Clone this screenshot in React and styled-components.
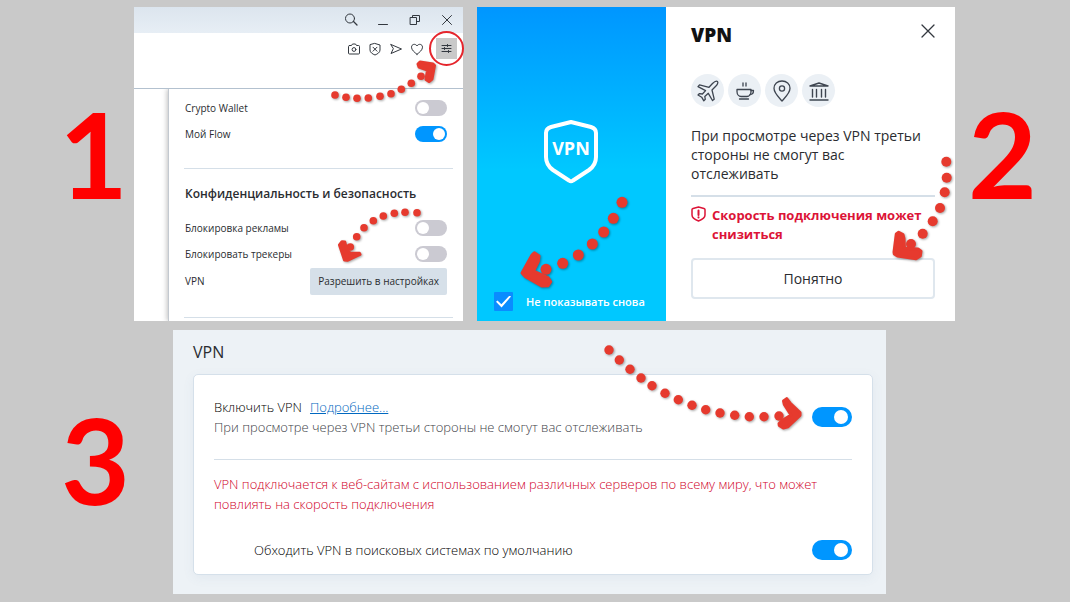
import React from "react";
import styled, { createGlobalStyle } from "styled-components";

const GlobalStyle = createGlobalStyle`
  * {
    box-sizing: border-box;
  }
  body {
    margin: 0;
    background: #c9c9c9;
    color: #2a2c30;
    font-family: "Open Sans", "Noto Sans", sans-serif;
  }
  h2, h3, p {
    margin: 0;
  }
  button, input {
    font-family: inherit;
    margin: 0;
  }
`;

const Page = styled.main`
  display: flex;
  flex-direction: column;
  gap: 9px;
  min-height: 100vh;
  padding: 7px 0;
`;

const TopStep = styled.section`
  display: grid;
  grid-template-columns: 134px minmax(0, 1fr) 115px;
`;

const BottomStep = styled.section`
  display: grid;
  grid-template-columns: 173px minmax(0, 1fr) 184px;
`;

const Panels = styled.div`
  display: grid;
  grid-template-columns: minmax(0, 329fr) minmax(0, 478fr);
  gap: 14px;
`;

const StepNumber = styled.div`
  padding-top: ${props => props.top}px;
  padding-left: ${props => props.left}px;
  color: #ff0000;
  font-family: Lato, sans-serif;
  font-size: 119px;
  font-weight: 700;
  line-height: 146px;
`;

/* dotted arrows */

const ArrowSvg = styled.svg`
  position: absolute;
  top: ${props => props.$top}px;
  left: ${props => (props.$left === undefined ? "auto" : `${props.$left}px`)};
  right: ${props => (props.$right === undefined ? "auto" : `${props.$right}px`)};
  fill: #e63a2e;
  stroke: #e63a2e;
  stroke-linejoin: round;
  filter: drop-shadow(1px 1px 1px rgba(0, 0, 0, 0.35));
  pointer-events: none;
  z-index: 2;
`;

const Arrow = ({ width, height, dots, radius, head, top, left, right }) => (
  <ArrowSvg
    width={width}
    height={height}
    $top={top}
    $left={left}
    $right={right}
    aria-hidden="true"
  >
    {dots.map(([x, y]) => (
      <circle key={`${x}-${y}`} cx={x} cy={y} r={radius} stroke="none" />
    ))}
    <polygon points={head} strokeWidth="3" />
  </ArrowSvg>
);

const arrows = {
  menu: {
    width: 110, height: 48, radius: 3.8,
    dots: [[5, 37], [16, 39.3], [27, 40.3], [38.3, 40], [50, 38.3], [61, 35.7], [71.3, 31.3], [81.3, 25.3], [91, 18.3]],
    head: "88,6 90,4 103,6 104.5,7.5 102,21 99,23.5 96,21.5 97.5,12 89,9"
  },
  allow: {
    width: 90, height: 58, radius: 3.8,
    dots: [[82, 4.7], [70, 4.3], [59.3, 5.3], [48.3, 8], [38.3, 12.7], [29, 19.7], [21.7, 28.7], [15.3, 39]],
    head: "4.5,37 7,33.7 9.8,34 11.5,41 15,45 24.5,45.3 25,46.3 12.3,52.3 9.5,52"
  },
  checkbox: {
    width: 112, height: 98, radius: 5.5,
    dots: [[104, 7.3], [95.3, 23.3], [85.7, 37], [74.3, 49], [60.3, 60], [44.7, 68.3], [28, 74.3]],
    head: "4,78 14,60 16.3,57.7 21,61 20.3,66.5 15.5,76 30,82.5 32.7,86.7 30,90.7 23.7,91 7.5,81.7"
  },
  confirm: {
    width: 64, height: 110, radius: 5,
    dots: [[56.3, 7.7], [56.7, 23.7], [54.7, 38.3], [50, 54], [42.7, 67.3], [32.7, 79.7], [21, 90]],
    head: "4,98 6.3,80 8.7,78.3 13,80.5 14,84.5 14.5,94.3 28,95 31,97.3 30.3,102 26,104.7 7.5,102 4.3,100"
  },
  enable: {
    width: 204, height: 92, radius: 4.7,
    dots: [[5, 6], [15.3, 16], [26, 25.3], [37, 34], [48, 41.7], [61, 49.3], [74.3, 55.7], [88, 61.3], [101.7, 65.7], [116, 69], [130.7, 71.3], [145.3, 72.7], [160, 72.7], [175, 72]],
    head: "179.5,57 182.7,54.7 186,59 196,68.6 196,71.3 184,82.7 179.3,84 175.3,81.5 175,79.5 177.5,77 187,71 180.3,60.5"
  }
};

/* shared controls */

const Switch = styled.input.attrs({ type: "checkbox", role: "switch" })`
  appearance: none;
  flex: none;
  display: flex;
  align-items: center;
  width: ${props => (props.$large ? 40 : 32)}px;
  height: ${props => (props.$large ? 20 : 16)}px;
  padding: 0 ${props => (props.$large ? 4 : 2)}px;
  border-radius: 10px;
  background: #cbcad2;
  cursor: pointer;

  &::before {
    content: "";
    width: ${props => (props.$large ? 14 : 12)}px;
    height: ${props => (props.$large ? 14 : 12)}px;
    border-radius: 50%;
    background: #fff;
  }
  &:checked {
    justify-content: flex-end;
    background: #0096ff;
  }
`;

const IconSvg = styled.svg`
  display: block;
  flex: none;
  fill: none;
  stroke: currentColor;
  stroke-width: ${props => props.$weight || 1};
  stroke-linecap: round;
  stroke-linejoin: round;
`;

const Icon = ({ size = 14, box = size, weight, children }) => (
  <IconSvg
    width={size}
    height={size}
    viewBox={`0 0 ${box} ${box}`}
    $weight={weight}
    aria-hidden="true"
  >
    {children}
  </IconSvg>
);

/* browser window */

const Browser = styled.article`
  position: relative;
  display: flex;
  flex-direction: column;
  background: #fff;
`;

const TitleBar = styled.header`
  display: flex;
  justify-content: flex-end;
  height: 26px;
  background: linear-gradient(#dce5ee, #e7eef5);
`;

const WindowButton = styled.button`
  display: flex;
  align-items: center;
  justify-content: center;
  width: 32px;
  padding: 0;
  border: 0;
  background: none;
  color: #33383f;
`;

const Toolbar = styled.div`
  display: flex;
  align-items: flex-start;
  justify-content: flex-end;
  height: 56px;
  padding: 5px 6px 0 0;
  border-bottom: 1px solid #b3c1cf;
`;

const ToolButton = styled(WindowButton)`
  width: 21px;
  height: 21px;
`;

const SetupButton = styled(ToolButton)`
  position: relative;
  margin-left: 9px;
  background: #c9c9c9;

  &::after {
    content: "";
    position: absolute;
    inset: -7px;
    border: 2px solid #e5252c;
    border-radius: 50%;
  }
`;

const BrowserBody = styled.div`
  flex: 1;
  display: flex;
  padding-left: 34px;
  overflow: hidden;
`;

const Sidebar = styled.aside`
  flex: 1;
  min-width: 0;
  padding: 6px 10px 3px 15px;
  border-left: 1px solid #c3c9d0;
  background: #fff;
  box-shadow: -1px 0 5px rgba(0, 0, 0, 0.25);
`;

const OptionRow = styled.div`
  display: flex;
  align-items: center;
  justify-content: space-between;
  height: ${props => (props.$tall ? 28 : 26)}px;
  padding: 0 6px 0 1px;
  font-size: 10px;
  white-space: nowrap;
`;

const Divider = styled.hr`
  height: ${props => props.$size || 1}px;
  margin: ${props => props.$gap}px 0 0;
  border: 0;
  background: #d5dfe8;
`;

const SidebarHeading = styled.h3`
  margin: 16px 0 12px 1px;
  font-size: 12px;
  font-weight: 600;
  line-height: 18px;
  white-space: nowrap;
`;

const AllowButton = styled.button`
  height: 27px;
  padding: 0 8px;
  border: 0;
  border-radius: 2px;
  background: #d6e0e9;
  color: #2a2c30;
  font-size: 10px;
`;

const BrowserWindow = () => (
  <Browser>
    <TitleBar>
      <WindowButton aria-label="Поиск">
        <Icon size={14}>
          <circle cx="6" cy="5.5" r="4.5" />
          <path d="M9.500 8.500 13 12" strokeWidth="1.3" />
        </Icon>
      </WindowButton>
      <WindowButton aria-label="Свернуть">
        <Icon size={14}>
          <path d="M2.5 11.5h9" />
        </Icon>
      </WindowButton>
      <WindowButton aria-label="Развернуть">
        <Icon size={14}>
          <path d="M2.5 4.5h6v7h-6z" />
          <path d="M4.5 4.5v-2h7v6h-3" />
        </Icon>
      </WindowButton>
      <WindowButton aria-label="Закрыть">
        <Icon size={14}>
          <path d="M2.5 2.5 11.5 11.5M11.5 2.5 2.5 11.5" />
        </Icon>
      </WindowButton>
    </TitleBar>
    <Toolbar>
      <ToolButton aria-label="Снимок">
        <Icon size={14}>
          <path d="M2.500 3.500h2l1-1.500h3l1 1.500h2q1 0 1 1v6.500q0 1-1 1h-9q-1 0-1-1V4.500q0-1 1-1z" />
          <circle cx="7" cy="7.5" r="1.9" />
        </Icon>
      </ToolButton>
      <ToolButton aria-label="Защита">
        <Icon size={14}>
          <path d="M7 1.5 12 3v5c0 2.500-2.500 4-5 5-2.500-1-5-2.500-5-5V3z" />
          <path d="M5 5.200 9 9.200M9 5.200 5 9.200" />
        </Icon>
      </ToolButton>
      <ToolButton aria-label="Flow">
        <Icon size={14}>
          <path d="M2 2.500 12.500 7 2 11.500 4.200 7z" />
        </Icon>
      </ToolButton>
      <ToolButton aria-label="Закладки">
        <Icon size={14}>
          <path d="M7 12.300C4.500 10.300 1.500 8 1.500 5.200 1.500 2 5.500 1.300 7 4c1.500-2.700 5.500-2 5.500 1.200 0 2.800-3 5.100-5.500 7.100z" />
        </Icon>
      </ToolButton>
      <SetupButton aria-label="Простые настройки">
        <Icon size={13}>
          <path d="M2 3.500h9M2 6.500h9M2 9.500h9M7.500 2.500v2M4.500 5.500v2M8.500 8.500v2" />
        </Icon>
      </SetupButton>
    </Toolbar>
    <BrowserBody>
      <Sidebar>
        <OptionRow>
          <label htmlFor="wallet">Crypto Wallet</label>
          <Switch id="wallet" />
        </OptionRow>
        <OptionRow>
          <label htmlFor="flow">Мой Flow</label>
          <Switch id="flow" defaultChecked />
        </OptionRow>
        <Divider $gap={21} />
        <SidebarHeading>Конфиденциальность и безопасность</SidebarHeading>
        <OptionRow>
          <label htmlFor="ads">Блокировка рекламы</label>
          <Switch id="ads" />
        </OptionRow>
        <OptionRow>
          <label htmlFor="trackers">Блокировать трекеры</label>
          <Switch id="trackers" />
        </OptionRow>
        <OptionRow $tall>
          <span>VPN</span>
          <AllowButton>Разрешить в настройках</AllowButton>
        </OptionRow>
        <Divider $gap={22} />
      </Sidebar>
    </BrowserBody>
    <Arrow {...arrows.menu} top={51} right={23} />
    <Arrow {...arrows.allow} top={201} right={38} />
  </Browser>
);

/* first-run dialog */

const Dialog = styled.article`
  position: relative;
  display: grid;
  grid-template-columns: minmax(0, 189fr) minmax(0, 289fr);
  background: #fff;
`;

const Promo = styled.div`
  display: flex;
  flex-direction: column;
  align-items: center;
  justify-content: space-between;
  padding: 112px 2px 10px 0;
  background: linear-gradient(#0096ff, #00c8ff 52%);
  color: #fff;
`;

const ShieldSvg = styled.svg`
  display: block;
  fill: none;
  stroke: #fff;
  stroke-width: 4;
  stroke-linejoin: round;

  text {
    fill: #fff;
    stroke: none;
    font-size: 18px;
    font-weight: 700;
    text-anchor: middle;
  }
`;

const HideLabel = styled.label`
  display: flex;
  align-items: center;
  align-self: flex-start;
  gap: 13px;
  padding-left: 17px;
  font-size: 11px;
  font-weight: 600;
  white-space: nowrap;
`;

const Tick = styled.input.attrs({ type: "checkbox" })`
  appearance: none;
  display: flex;
  align-items: center;
  justify-content: center;
  width: 19px;
  height: 19px;
  border-radius: 1px;
  background: #0a8cff;

  &:checked::before {
    content: "";
    width: 15px;
    height: 12px;
    background: #fff;
    clip-path: polygon(0 52%, 10% 42%, 36% 72%, 90% 0, 100% 9%, 37% 100%);
  }
`;

const DialogBody = styled.div`
  display: flex;
  flex-direction: column;
  padding: 15px 20px 22px 25px;
`;

const DialogHeader = styled.header`
  display: flex;
  align-items: flex-start;
  justify-content: space-between;
  height: 26px;
`;

const DialogTitle = styled.h2`
  font-size: 19px;
  font-weight: 800;
  line-height: 26px;
  color: #111;
`;

const CloseButton = styled.button`
  padding: 2px 0;
  border: 0;
  background: none;
  color: #33383f;
`;

const Places = styled.div`
  display: flex;
  gap: 4px;
  margin: 26px 0 19px;
`;

const Place = styled.span`
  display: flex;
  align-items: center;
  justify-content: center;
  width: 33px;
  height: 33px;
  border-radius: 50%;
  background: #ebf0f5;
  color: #3e4550;
`;

const DialogText = styled.p`
  font-size: 14px;
  line-height: 19px;
`;

const Warning = styled.div`
  display: flex;
  align-items: flex-start;
  gap: 5px;
  margin-top: 9px;
  color: #dc1437;
  font-size: 13px;
  font-weight: 700;
  line-height: 19px;
`;

const ConfirmButton = styled.button`
  height: 41px;
  margin-top: auto;
  border: 2px solid #dfe7ee;
  border-radius: 4px;
  background: #fff;
  color: #2a2c30;
  font-size: 14px;
`;

const VpnDialog = () => (
  <Dialog role="dialog" aria-label="VPN">
    <Promo>
      <ShieldSvg width="56" height="66" aria-hidden="true">
        <path d="M28 3 48 8q5 1.500 5 6v24q0 8-7 13L30 61.500q-2 1.500-4 0L10 51q-7-5-7-13V14q0-4.500 5-6z" />
        <text x="28" y="36">VPN</text>
      </ShieldSvg>
      <HideLabel>
        <Tick defaultChecked />
        Не показывать снова
      </HideLabel>
    </Promo>
    <DialogBody>
      <DialogHeader>
        <DialogTitle>VPN</DialogTitle>
        <CloseButton aria-label="Закрыть">
          <Icon size={14} weight={1.3}>
            <path d="M1 1 13 13M13 1 1 13" />
          </Icon>
        </CloseButton>
      </DialogHeader>
      <Places>
        <Place>
          <Icon size={24} weight={1.3}>
            <path d="M13 8.300 16.500 4.500C18 3 20.500 1.700 21.500 2.500s-.300 3.300-1.800 4.800L16 11l2.200 9.200-1.700 1.300-4.200-7.200-3.500 3.200.5 2.800-1.500 1.500-2.100-3.600L2 16l1.500-1.400 2.900.4 3.200-3.400L2 7.600l1.500-1.800z" />
          </Icon>
        </Place>
        <Place>
          <Icon size={22} weight={1.3}>
            <path d="M3 9.500h14v2c0 3-2 5-4 5H7c-2 0-4-2-4-5z" />
            <path d="M17 10.500h2.500c0 2.500-1.500 4-3.500 4M5.500 19h9M9 3v3M12 3v3" />
          </Icon>
        </Place>
        <Place>
          <Icon size={24} weight={1.3}>
            <path d="M12 22C8 17.500 4 14 4 9.300 4 5 7.500 2 12 2s8 3 8 7.300C20 14 16 17.500 12 22z" />
            <circle cx="12" cy="9.500" r="2.600" />
          </Icon>
        </Place>
        <Place>
          <Icon size={22} weight={1.4}>
            <path d="M2 6 11 3l9 3zM2 20h18" />
            <path d="M4.500 9.500v7.500M8.500 9.500v7.500M13.500 9.500v7.500M17.500 9.500v7.500" />
          </Icon>
        </Place>
      </Places>
      <DialogText>
        При просмотре через VPN третьи стороны не смогут вас отслеживать
      </DialogText>
      <Divider $size={2} $gap={12} />
      <Warning>
        <Icon size={16} weight={1.5}>
          <path d="M7.500 1 13 2.500q1 .300 1 1V9q0 3.500-6.500 6Q1 12.500 1 9V3.500q0-.700 1-1z" />
          <path d="M7.500 4.500v4.500M7.500 11.200v.300" strokeWidth="2" />
        </Icon>
        <p>Скорость подключения может снизиться</p>
      </Warning>
      <ConfirmButton>Понятно</ConfirmButton>
    </DialogBody>
    <Arrow {...arrows.checkbox} top={188} left={41} />
    <Arrow {...arrows.confirm} top={147} right={1} />
  </Dialog>
);

/* settings page */

const Settings = styled.article`
  position: relative;
  padding: 12px 13px 19px 20px;
  background: #edf2f6;
`;

const SettingsTitle = styled.h2`
  margin-bottom: 12px;
  font-size: 16px;
  font-weight: 400;
  line-height: 20px;
`;

const Card = styled.div`
  padding: 22px 20px 14px;
  border: 1px solid #d5e0ea;
  border-radius: 5px;
  background: #fff;
  box-shadow: 0 3px 12px rgba(90, 120, 150, 0.07);
  color: #000;
  font-size: 13px;
  font-weight: 300;
  line-height: 20px;
`;

const SettingRow = styled.div`
  display: flex;
  align-items: center;
  justify-content: space-between;
  padding-left: ${props => (props.$nested ? 40 : 0)}px;
`;

const MoreLink = styled.a`
  margin-left: 8px;
  color: #0068c0;
`;

const Hint = styled.p`
  color: #404248;
`;

const Alert = styled.p`
  max-width: 620px;
  margin: 14px 0 26px;
  color: #d00028;
`;

const VpnSettings = () => (
  <Settings>
    <SettingsTitle>VPN</SettingsTitle>
    <Card>
      <SettingRow>
        <div>
          <label htmlFor="vpn">Включить VPN</label>
          <MoreLink href="#more">Подробнее...</MoreLink>
          <Hint>
            При просмотре через VPN третьи стороны не смогут вас отслеживать
          </Hint>
        </div>
        <Switch id="vpn" $large defaultChecked />
      </SettingRow>
      <Divider $gap={22} />
      <Alert>
        VPN подключается к веб-сайтам с использованием различных серверов по
        всему миру, что может повлиять на скорость подключения
      </Alert>
      <SettingRow $nested>
        <label htmlFor="bypass">
          Обходить VPN в поисковых системах по умолчанию
        </label>
        <Switch id="bypass" $large defaultChecked />
      </SettingRow>
    </Card>
    <Arrow {...arrows.enable} top={14} right={78} />
  </Settings>
);

const App = () => (
  <>
    <GlobalStyle />
    <Page>
      <TopStep>
        <StepNumber top={73} left={59}>1</StepNumber>
        <Panels>
          <BrowserWindow />
          <VpnDialog />
        </Panels>
        <StepNumber top={73} left={13}>2</StepNumber>
      </TopStep>
      <BottomStep>
        <StepNumber top={56} left={61}>3</StepNumber>
        <VpnSettings />
      </BottomStep>
    </Page>
  </>
);

export default App;
